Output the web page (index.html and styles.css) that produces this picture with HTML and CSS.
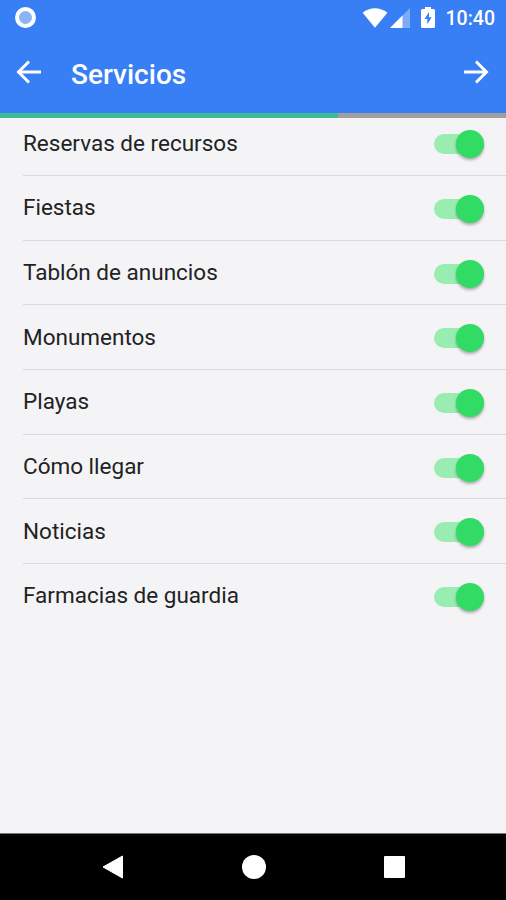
FILE: index.html
```html
<!DOCTYPE html>
<html lang="es">
<head>
    <meta charset="UTF-8">
    <meta name="viewport" content="width=device-width, initial-scale=1.0">
    <title>Servicios</title>
    <link rel="stylesheet" href="styles.css">
</head>
<body>
    <header class="header">
        <div class="status-bar">
            <span class="status-dot"></span>
            <div class="status-icons">
                <svg class="wifi" width="26" height="20" viewBox="0 0 26 20"><path d="M.6 4.800C7.5-1.200 18.500-1.200 25.400 4.800L13 19.800z" fill="#fff"/></svg>
                <svg class="signal" width="20" height="20" viewBox="0 0 20 20"><path d="M0 20L20 0v20z" fill="#fff" opacity=".35"/><path d="M0 20L12.500 7.500V20z" fill="#fff"/></svg>
                <svg class="battery" width="14" height="21" viewBox="0 0 14 21"><path d="M4 0h6v2h2.500Q14 2 14 3.500v16q0 1.500-1.500 1.500h-11Q0 21 0 19.500v-16Q0 2 1.500 2H4z" fill="#fff"/><path d="M8 5L3.500 12H6.300V17.300L10.700 10.300H8z" fill="#387ef5"/></svg>
                <span class="clock">10:40</span>
            </div>
        </div>
        <div class="toolbar">
            <a class="nav-button" href="#" aria-label="Atrás">
                <svg width="26" height="24" viewBox="0 0 26 24"><path d="M25 12H2M13 1.500L2.500 12L13 22.500"/></svg>
            </a>
            <h1 class="title">Servicios</h1>
            <a class="nav-button" href="#" aria-label="Siguiente">
                <svg width="26" height="24" viewBox="0 0 26 24"><path d="M1 12h23M13 1.500L23.500 12L13 22.500"/></svg>
            </a>
        </div>
        <div class="progress"><div class="progress-value"></div></div>
    </header>

    <main class="content">
        <ul class="list">
            <li class="item"><span class="label">Reservas de recursos</span><span class="toggle"></span></li>
            <li class="item"><span class="label">Fiestas</span><span class="toggle"></span></li>
            <li class="item"><span class="label">Tablón de anuncios</span><span class="toggle"></span></li>
            <li class="item"><span class="label">Monumentos</span><span class="toggle"></span></li>
            <li class="item"><span class="label">Playas</span><span class="toggle"></span></li>
            <li class="item"><span class="label">Cómo llegar</span><span class="toggle"></span></li>
            <li class="item"><span class="label">Noticias</span><span class="toggle"></span></li>
            <li class="item"><span class="label">Farmacias de guardia</span><span class="toggle"></span></li>
        </ul>
    </main>

    <footer class="system-nav">
        <svg width="22" height="24" viewBox="0 0 22 24"><path d="M20.500 1v22L1 12z" fill="#fff" stroke="#fff" stroke-linejoin="round"/></svg>
        <span class="home"></span>
        <span class="recent"></span>
    </footer>
</body>
</html>
```
FILE: styles.css
```css
* {
    box-sizing: border-box;
}
body {
    margin: 0;
    height: 900px;
    display: flex;
    flex-direction: column;
    overflow: hidden;
    background-color: #f4f4f7;
    color: #222;
    font-family: Roboto, "Liberation Sans", sans-serif;
}
.header {
    height: 118px;
    display: flex;
    flex-direction: column;
    background-color: #387ef5;
    color: #fff;
}
.status-bar {
    height: 35px;
    padding: 0 11px 0 15px;
    display: flex;
    align-items: center;
    justify-content: space-between;
}
.status-dot {
    width: 21px;
    height: 21px;
    border: 4px solid #fff;
    border-radius: 50%;
    background-color: #8bb3f6;
}
.status-icons {
    display: flex;
    align-items: center;
}
.signal {
    margin: 0 11px 0 2px;
}
.clock {
    margin-left: 11px;
    padding-top: 2px;
    font-size: 19.5px;
    font-weight: 500;
    line-height: 24px;
}
.toolbar {
    height: 78px;
    padding: 0 17px 4px 16px;
    display: flex;
    align-items: center;
}
.nav-button {
    display: flex;
}
.nav-button path {
    fill: none;
    stroke: #fff;
    stroke-width: 3;
}
.title {
    flex: 1;
    margin: 6px 0 0 29px;
    font-size: 28px;
    font-weight: 500;
    line-height: 34px;
}
.progress {
    height: 5px;
    background-color: #a09f9f;
}
.progress-value {
    width: 66.8%;
    height: 100%;
    background-color: #3cba92;
}
.content {
    flex: 1;
    overflow: hidden;
}
.list {
    margin: -6.7px 0 0;
    padding: 0 0 0 23px;
    list-style: none;
}
.item {
    height: 64.7px;
    padding: 2px 22px 0 0;
    display: flex;
    align-items: center;
    justify-content: space-between;
    border-bottom: 1px solid #dadadd;
    font-size: 22.5px;
    line-height: 30px;
}
.item:last-child {
    border-bottom-color: transparent;
}
.label {
    padding-bottom: 3px;
}
.toggle {
    width: 50px;
    height: 20px;
    display: flex;
    align-items: center;
    justify-content: flex-end;
    border-radius: 10px;
    background-color: #99edb0;
}
.toggle::after {
    content: "";
    width: 28px;
    height: 28px;
    border-radius: 50%;
    background-color: #32db64;
    box-shadow: 0 2px 3px rgba(0, 0, 0, 0.3);
}
.system-nav {
    height: 67px;
    padding: 0 101px 0 102px;
    display: flex;
    align-items: center;
    justify-content: space-between;
    border-top: 1px solid #777;
    background-color: #000;
}
.home {
    width: 24px;
    height: 24px;
    border-radius: 50%;
    background-color: #fff;
}
.recent {
    width: 21px;
    height: 22px;
    border-radius: 1px;
    background-color: #fff;
}
```
